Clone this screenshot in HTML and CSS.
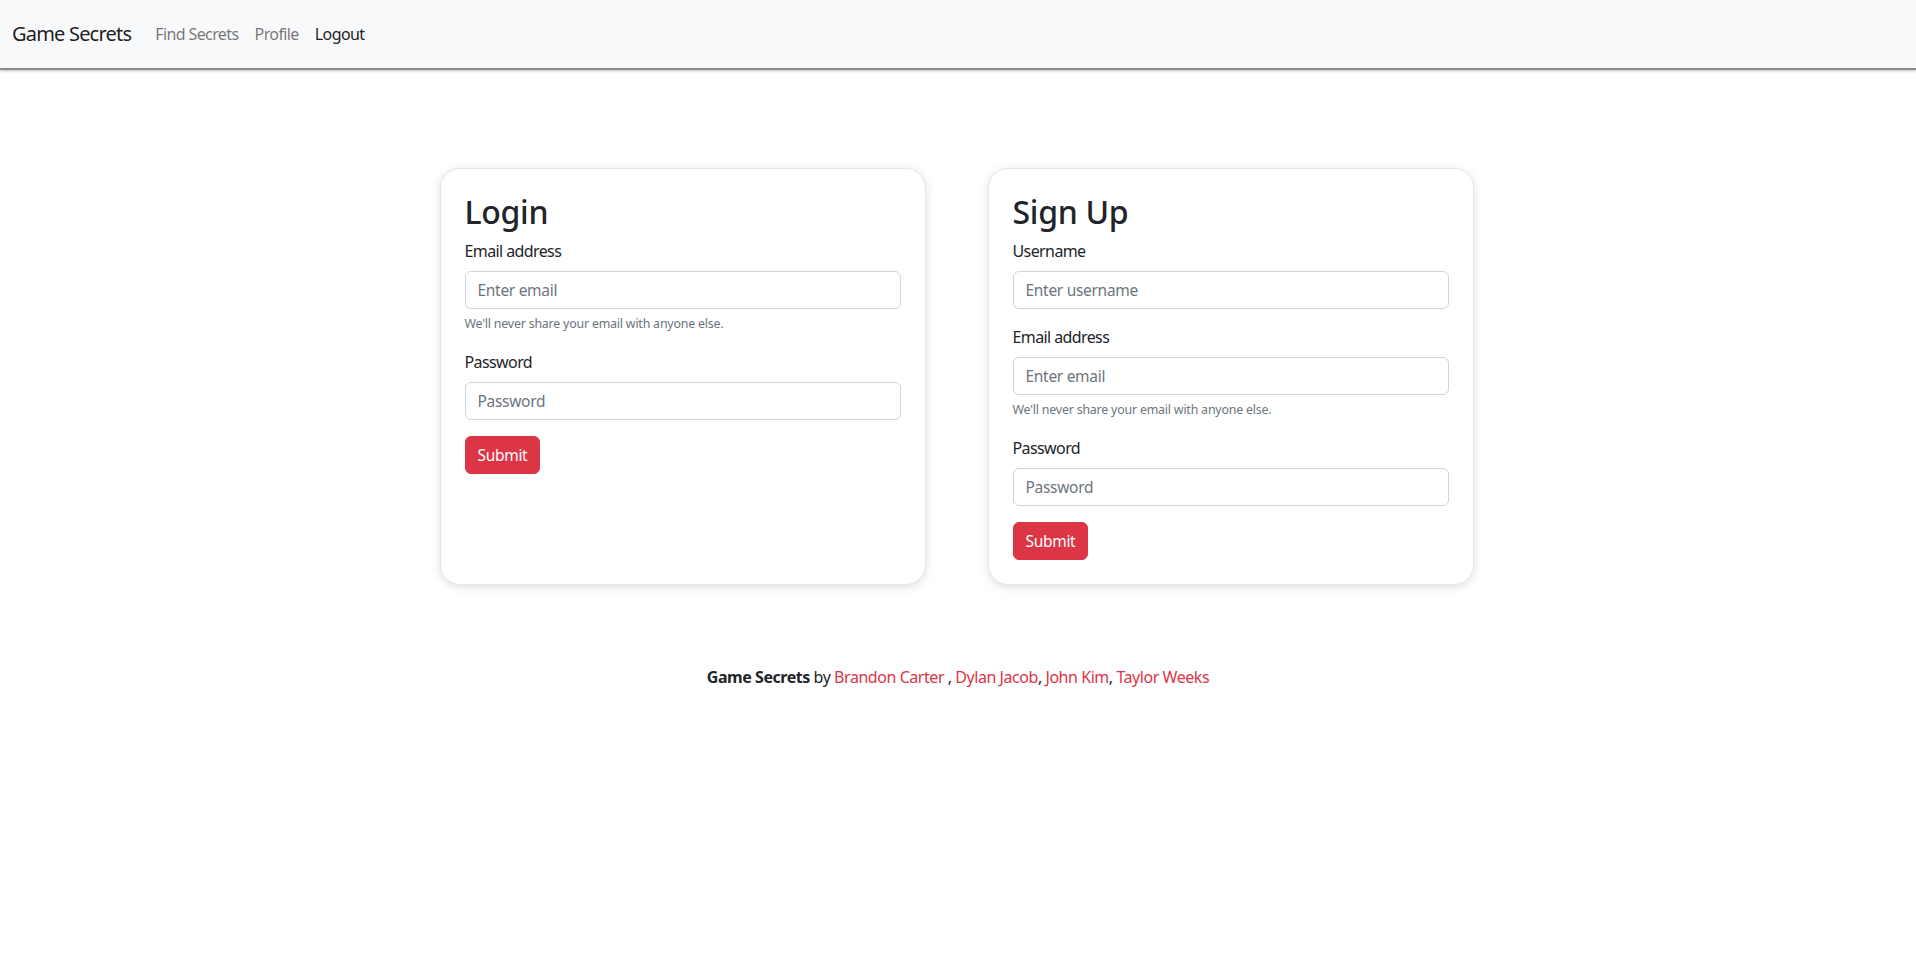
FILE: index.html
```html
<!DOCTYPE html>
<html lang="en">
<head>
<meta charset="utf-8">
<title>Game Secrets</title>
<link rel="stylesheet" href="styles.css">
</head>
<body>
<nav class="navbar">
  <a class="brand" href="#">Game Secrets</a>
  <ul class="nav">
    <li><a class="nav-link" href="#">Find Secrets</a></li>
    <li><a class="nav-link" href="#">Profile</a></li>
    <li><a class="nav-link active" href="#">Logout</a></li>
  </ul>
</nav>

<main class="forms">
  <section class="card">
    <h2 class="card-title">Login</h2>
    <div class="field">
      <label class="label">Email address</label>
      <input class="input" type="email" placeholder="Enter email">
      <div class="help">We'll never share your email with anyone else.</div>
    </div>
    <div class="field">
      <label class="label">Password</label>
      <input class="input" type="password" placeholder="Password">
    </div>
    <button class="btn" type="button">Submit</button>
  </section>

  <section class="card">
    <h2 class="card-title">Sign Up</h2>
    <div class="field">
      <label class="label">Username</label>
      <input class="input" type="text" placeholder="Enter username">
    </div>
    <div class="field">
      <label class="label">Email address</label>
      <input class="input" type="email" placeholder="Enter email">
      <div class="help">We'll never share your email with anyone else.</div>
    </div>
    <div class="field">
      <label class="label">Password</label>
      <input class="input" type="password" placeholder="Password">
    </div>
    <button class="btn" type="button">Submit</button>
  </section>
</main>

<footer class="footer">
  <strong>Game Secrets</strong> by <a href="#">Brandon Carter</a> , <a href="#">Dylan Jacob</a>, <a href="#">John Kim</a>, <a href="#">Taylor Weeks</a>
</footer>
</body>
</html>
```

FILE: styles.css
```css
* { box-sizing: border-box; }

html, body {
  margin: 0;
  padding: 0;
  background: #fff;
}

body {
  font-family: "Noto Sans", "Open Sans", "Liberation Sans", sans-serif;
  font-size: 16px;
  line-height: 1.5;
  color: #212529;
}

.navbar {
  height: 70px;
  background: #f8f9fa;
  display: flex;
  align-items: center;
  padding: 0 12px;
  border-bottom: 2px solid #8a8a8a;
  box-shadow: 0 1px 3px rgba(0, 0, 0, 0.25);
}

.brand {
  font-size: 20px;
  color: rgba(0, 0, 0, 0.9);
  text-decoration: none;
  margin-right: 16px;
  letter-spacing: -0.8px;
}

.nav {
  display: flex;
  list-style: none;
  margin: 0;
  padding: 0;
}

.nav-link {
  display: block;
  padding: 8px;
  color: rgba(0, 0, 0, 0.55);
  text-decoration: none;
  letter-spacing: -0.6px;
}

.nav-link.active {
  color: rgba(0, 0, 0, 0.9);
}

.forms {
  display: flex;
  justify-content: center;
  align-items: stretch;
  gap: 62px;
  margin-top: 98px;
  padding-right: 3px;
}

.card {
  width: 486px;
  background: #fff;
  border: 1px solid #e6e6e6;
  border-radius: 20px;
  box-shadow: 0 2px 10px rgba(0, 0, 0, 0.13);
  padding: 24px;
}

.card-title {
  margin: 0 0 8px;
  font-size: 32px;
  font-weight: 500;
  line-height: 1.2;
  letter-spacing: -0.3px;
}

.field {
  margin-bottom: 16px;
}

.label {
  display: block;
  margin-bottom: 8px;
  letter-spacing: -0.6px;
}

.input {
  display: block;
  width: 100%;
  height: 38px;
  padding: 6px 12px;
  font: inherit;
  font-size: 15.5px;
  color: #212529;
  background: #fff;
  border: 1px solid #ced4da;
  border-radius: 6px;
  letter-spacing: -0.3px;
}

.input::placeholder {
  color: #6c757d;
}

.help {
  margin-top: 4px;
  font-size: 12.4px;
  line-height: 21px;
  color: #6c757d;
  letter-spacing: -0.2px;
}

.btn {
  display: inline-block;
  height: 38px;
  padding: 0 12px;
  font: inherit;
  font-size: 15.5px;
  color: #fff;
  background: #dc3545;
  border: 1px solid #dc3545;
  border-radius: 6px;
  letter-spacing: -0.3px;
}

.footer {
  text-align: center;
  margin-top: 80px;
  letter-spacing: -0.45px;
}

.footer strong {
  font-weight: 700;
}

.footer a {
  color: #dc3545;
  text-decoration: none;
}
```
